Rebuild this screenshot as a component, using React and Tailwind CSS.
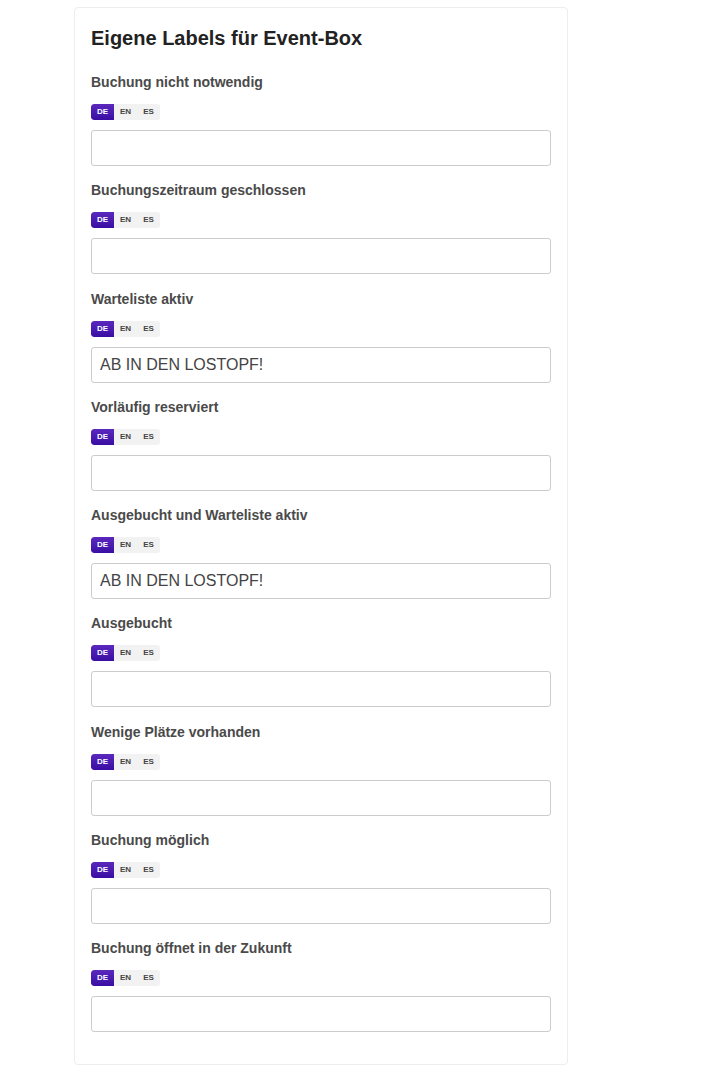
import React, { useState } from "react";

const fields = [
  { label: "Buchung nicht notwendig", value: "" },
  { label: "Buchungszeitraum geschlossen", value: "" },
  { label: "Warteliste aktiv", value: "AB IN DEN LOSTOPF!" },
  { label: "Vorläufig reserviert", value: "" },
  { label: "Ausgebucht und Warteliste aktiv", value: "AB IN DEN LOSTOPF!" },
  { label: "Ausgebucht", value: "" },
  { label: "Wenige Plätze vorhanden", value: "" },
  { label: "Buchung möglich", value: "" },
  { label: "Buchung öffnet in der Zukunft", value: "" },
];

const LangSwitch = () => {
  const [lang, setLang] = useState("DE");
  return (
    <div className="flex w-[69px] h-4 rounded-[3px] bg-[#f2f2f2] overflow-hidden">
      {["DE", "EN", "ES"].map((l) => (
        <button
          key={l}
          onClick={() => setLang(l)}
          className={
            lang === l
              ? "w-[23px] h-4 text-[8px] font-bold leading-4 text-white bg-gradient-to-b from-[#5b27bd] to-[#3a0ca3] rounded-l-[3px]"
              : "w-[23px] h-4 text-[8px] font-bold leading-4 text-[#444]"
          }
        >
          {l}
        </button>
      ))}
    </div>
  );
};

const App = () => {
  const [values, setValues] = useState(fields.map((f) => f.value));

  return (
    <div className="min-h-[1074px] bg-white font-['Liberation_Sans',Arial,sans-serif] pt-[7px]">
      <div className="ml-[74px] w-[494px] border border-[#ededed] rounded-[4px] px-4 pt-4 pb-[18px]">
        <h2 className="text-[20px] leading-[28px] font-bold text-[#222] mb-5">
          Eigene Labels für Event-Box
        </h2>
        {fields.map((f, i) => (
          <div key={f.label} className="mb-[14.25px]">
            <label className="block text-[14px] leading-5 font-bold text-[#4a4a4a] mb-3">
              {f.label}
            </label>
            <LangSwitch />
            <input
              type="text"
              value={values[i]}
              onChange={(e) => {
                const next = [...values];
                next[i] = e.target.value;
                setValues(next);
              }}
              className="block mt-[10px] w-[460px] h-9 border border-[#cccccc] rounded-[3px] px-2 text-[16px] text-[#444] outline-none"
            />
          </div>
        ))}
      </div>
    </div>
  );
};

export default App;
